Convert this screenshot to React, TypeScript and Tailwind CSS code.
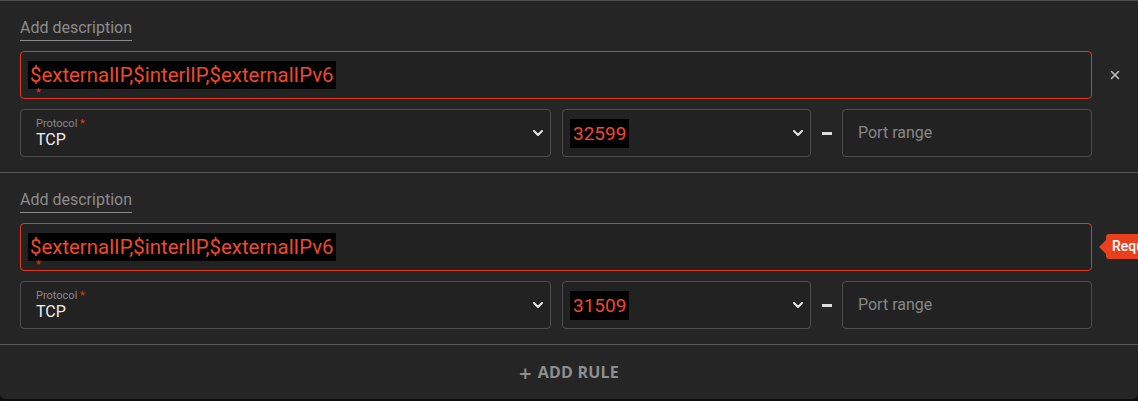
import React from "react";
import { X } from "lucide-react";

interface RuleProps {
  port: string;
  showClose?: boolean;
  showTooltip?: boolean;
}

const Chevron = () => (
  <svg width="12" height="8" viewBox="0 0 12 8" className="shrink-0">
    <path
      d="M2 2 L6 6 L10 2"
      fill="none"
      stroke="#e6e6e6"
      strokeWidth="2"
      strokeLinecap="round"
      strokeLinejoin="round"
    />
  </svg>
);

const Rule = ({ port, showClose, showTooltip }: RuleProps) => {
  return (
    <div className="border-b border-[#5a5a5a] pt-[15px] pb-[15px] pl-5">
      <div className="h-[25px]">
        <span className="inline-block h-[25px] border-b border-[#8a8a8a] text-[16px] leading-[24px] text-[#8c8c8c]">
          Add description
        </span>
      </div>

      <div className="mt-[10px] flex items-center">
        <div className="relative flex h-[48px] w-[1072px] items-center rounded-[4px] border border-[#e2391c] bg-[#222222] pl-[7px]">
          <span className="bg-black px-[2px] py-[2px] text-[20.4px] leading-[24px] text-[#ee4a2c]">
            $externalIP,$interlIP,$externalIPv6
          </span>
          <span className="absolute left-[15px] top-[35px] text-[11px] leading-[11px] text-[#e2391c]">
            *
          </span>
          {showTooltip && (
            <div className="absolute left-[1078px] top-[10px] flex items-center">
              <div className="h-0 w-0 border-y-[7px] border-r-[7px] border-y-transparent border-r-[#e8401c]" />
              <div className="flex h-[25px] items-center whitespace-nowrap rounded-[3px] bg-[#e8401c] pl-[6px] pr-3 text-[14px] font-medium text-white">
                Required
              </div>
            </div>
          )}
        </div>
        <div className="flex w-[46px] justify-center">
          {showClose && <X size={14} strokeWidth={2.6} color="#bdbdbd" />}
        </div>
      </div>

      <div className="mt-[10px] flex h-[48px] items-stretch">
        <div className="mr-[11px] flex w-[531px] items-center justify-between rounded-[4px] border border-[#4e4e4e] bg-[#222222] pl-[15px] pr-[6px]">
          <div className="flex flex-col">
            <span className="text-[11px] leading-[13px] text-[#888888]">
              Protocol <span className="text-[#e2391c]">*</span>
            </span>
            <span className="text-[16px] leading-[20px] text-[#eeeeee]">TCP</span>
          </div>
          <Chevron />
        </div>

        <div className="flex w-[249px] items-center justify-between rounded-[4px] border border-[#4e4e4e] bg-[#222222] pl-[7px] pr-[6px]">
          <span className="bg-black px-[3px] py-[3px] text-[19px] leading-[23px] text-[#ee4a2c]">
            {port}
          </span>
          <Chevron />
        </div>

        <div className="flex w-[31px] items-center justify-center">
          <div className="h-[3px] w-[10px] bg-[#dddddd]" />
        </div>

        <div className="flex w-[250px] items-center rounded-[4px] border border-[#4e4e4e] bg-[#222222] pl-[15px]">
          <span className="text-[16px] text-[#878787]">Port range</span>
        </div>
      </div>
    </div>
  );
};

const App = () => {
  return (
    <div
      className="h-[401px] w-[1138px] overflow-hidden bg-[#101010]"
      style={{ fontFamily: "Roboto, 'Liberation Sans', sans-serif" }}
    >
      <div className="h-[401px] overflow-hidden rounded-b-[6px] border-b-2 border-t border-b-[#0e0e0e] border-t-[#4d4d4d] bg-[#252525]">
        <Rule port="32599" showClose />
        <Rule port="31509" showTooltip />
        <div className="flex h-[54px] items-center justify-center">
          <span
            className="flex items-center gap-[6px] text-[16px] font-bold tracking-[0.2px] text-[#8e8e8e]"
            style={{ fontFamily: "'Open Sans', sans-serif" }}
          >
            <span className="text-[22px] font-semibold leading-[16px]">+</span>
            ADD RULE
          </span>
        </div>
      </div>
    </div>
  );
};

export default App;
